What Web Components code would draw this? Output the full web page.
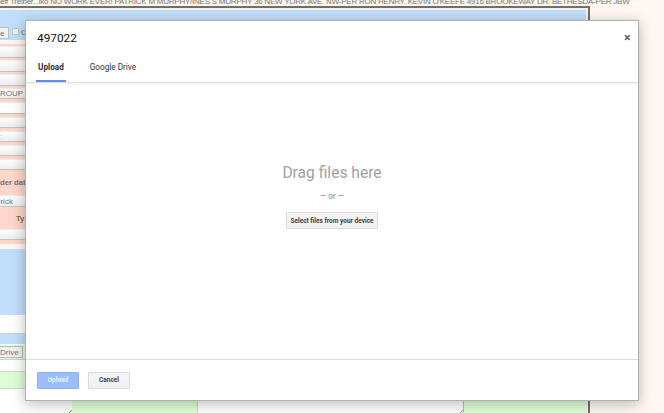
<!DOCTYPE html>
<html lang="en"><head><meta charset="utf-8"><title>497022</title>
<style>html,body{margin:0;height:100%;overflow:hidden;background:#fef8f1}body{font-family:"Liberation Sans",Arial,sans-serif}</style></head>
<body><upload-page></upload-page>
<script>
const define = (name, html) => {
  const t = document.createElement('template');
  t.innerHTML = html;
  customElements.define(name, class extends HTMLElement {
    constructor() { super(); this.attachShadow({mode:'open'}).append(t.content.cloneNode(true)); }
    connectedCallback() {
      const h = this.getAttribute('h');
      if (h) this.style.setProperty('--h', h + 'px');
    }
  });
};
define('form-band', `<style>:host{display:flex;flex:none;align-items:center;box-sizing:border-box;height:var(--h);background:var(--bg,#ffd6ca);white-space:nowrap;font-size:8px;color:#77716f}
:host([tone=blue]){--bg:#c1dffb}:host([tone=cream]){--bg:#fef8f0}:host([tone=white]){--bg:#fff}:host([tone=green]){--bg:#deffd5}:host([tone=line]){--bg:#d0d0d0}</style><slot></slot>`);
define('form-field', `<style>:host{display:flex;flex:none;align-items:center;box-sizing:border-box;height:var(--h);background:linear-gradient(#fdfdfd,#eee);border-top:1px solid #ececec;border-bottom:1px solid #c6c0be;font-size:8px;line-height:9px;color:#687684;white-space:nowrap}
:host([plain]){background:#fff}</style><slot></slot>`);
define('order-form', `<style>:host{display:flex;flex-direction:column;flex:none;box-sizing:border-box;width:590px;height:407px;border-top:2px solid #716f68;border-right:2px solid #716f68;overflow:hidden}
.inner{flex:1;border-top:2px solid #f4f3ec;border-right:2px solid #f4f3ec;display:flex;flex-direction:column;overflow:hidden}
.top{display:flex;align-items:center;padding-top:15px}
.btn{box-sizing:border-box;width:9px;height:12px;line-height:11px;background:#f2f2f2;border:1px solid #b8bec5;border-left:0;font-size:8px;color:#777}
.box{box-sizing:border-box;width:7px;height:7px;border:1px solid #bdc4ca;background:#f0f2f3;border-radius:1px;margin:-3px 2px 0 3px}
.drive{box-sizing:border-box;width:23px;height:12px;line-height:11px;border:1px solid #bbb;border-left:0;background:#f2f2f2;color:#777}
.ty{padding-left:16px}b{font-size:7.7px}
form-band[h="12"]{align-items:stretch}
.note{width:72px;box-sizing:border-box;background:#fff;display:flex;align-items:flex-end;justify-content:flex-end}
.mid{width:267px;background:#fff;box-sizing:border-box;border-left:1px solid #ccd8c8;border-right:1px solid #bbb;display:flex;align-items:flex-end;justify-content:flex-end}
.green{width:125px}.early{margin-left:-4px}svg{display:block}</style>
<div class="inner">
<form-band tone="blue" h="30"><span class="top"><span class="btn">e</span><span class="box"></span><span>C</span></span></form-band>
<form-band tone="cream" h="4"></form-band><form-band h="2"></form-band>
<form-field h="12"></form-field><form-band h="2"></form-band>
<form-field h="12"></form-field><form-band h="2"></form-band>
<form-field h="12"></form-field><form-band h="2"></form-band>
<form-field h="11">ROUP</form-field><form-band h="3"></form-band>
<form-field plain h="12"></form-field><form-band h="3"></form-band>
<form-field h="11"></form-field><form-band h="3"></form-band>
<form-field h="11"><span style="color:#7ab0ca">:</span></form-field><form-band h="3"></form-band>
<form-field h="11"></form-field><form-band h="3"></form-band>
<form-field h="11"></form-field>
<form-band h="25"><b>der date</b></form-band>
<form-field h="12"><span class="early">erick</span></form-field>
<form-band h="22"><b class="ty">Ty</b></form-band>
<form-field h="11"></form-field><form-band h="4"></form-band>
<form-band tone="cream" h="5"></form-band>
<form-band tone="blue" h="66"></form-band><form-band tone="white" h="18"></form-band>
<form-band tone="line" h="1"></form-band><form-band tone="blue" h="10"></form-band>
<form-band tone="white" h="1"></form-band>
<form-band tone="green" h="14"><span class="drive">Drive</span></form-band>
<form-band tone="line" h="1"></form-band><form-band tone="white" h="11"></form-band><form-band tone="line" h="1"></form-band>
<form-band tone="green" h="16"></form-band><form-band tone="line" h="1"></form-band><form-band tone="white" h="12"></form-band>
<form-band tone="green" h="12"><span class="note"><svg width="3" height="3"><path d="M0 3L3 0" stroke="#888"/></svg></span><span class="green"></span><span class="mid"><svg width="3" height="3"><path d="M0 3L3 0" stroke="#888"/></svg></span></form-band>
</div>`);
define('notice-line', `<style>:host{display:block;flex:none;height:6px;overflow:visible;white-space:pre;font-size:8px;line-height:9px;color:#77736f}
span{display:block;width:max-content;margin-top:-3px;letter-spacing:-.236px}</style><span><slot></slot></span>`);
define('action-button', `<style>:host{display:inline-flex;box-sizing:border-box;align-items:center;justify-content:center;height:17px;border:1px solid #d9d9d9;border-radius:1px;background:linear-gradient(#f5f5f5,#f0f0f0);color:#424242;font:bold 6.5px Roboto,sans-serif;white-space:nowrap}
:host([primary]){background:#9bbdfb;border-color:#91b0ee;color:#e9f1ff}</style><slot></slot>`);
define('nav-tab', `<style>:host{display:flex;box-sizing:border-box;padding:0 2px;height:27px;font:8.2px/24px Roboto,sans-serif;color:#303030;white-space:nowrap}
:host([active]){font-weight:bold;border-bottom:2px solid #5f8be8}</style><slot></slot>`);
define('picker-dialog', `<style>:host{display:flex;flex-direction:column;box-sizing:border-box;border:1px solid #afb0b0;background:#fff;box-shadow:0 3px 14px rgba(0,0,0,.27);font-family:Roboto,sans-serif;color:#111}
header{height:62px;box-sizing:border-box;border-bottom:1px solid #dedede;box-shadow:0 1px 2px #0001;padding:0 7px 0 11px;flex:none}
.title{display:flex;justify-content:space-between;align-items:center;height:34px}.title h1{font:400 11.8px/14px Roboto,sans-serif;margin:0}
.title svg{margin:-2px .5px 0 0}
nav{display:flex;gap:22px;margin-left:-1px}
main{flex:1;display:flex;flex-direction:column;align-items:center;padding-top:80.5px;color:#a0a0a0}
.drag{font-size:15.6px;line-height:19px}.or{font-size:8.2px;font-weight:500;line-height:10px;margin:8px 0 11.5px}
footer{height:41px;box-sizing:border-box;border-top:1px solid #dcdcdc;padding:0 11px;display:flex;gap:9px;align-items:center;flex:none}
footer action-button{width:42px}main action-button{width:92px}</style>
<header><div class="title"><h1>497022</h1><svg width="7" height="7" viewBox="0 0 7 7"><path d="M1 1.2l4.7 4.7M5.7 1.2L1 5.9" stroke="#5c5c5c" stroke-width="1.5"/></svg></div>
<nav><nav-tab active>Upload</nav-tab><nav-tab>Google Drive</nav-tab></nav></header>
<main><div class="drag">Drag files here</div><div class="or">— or —</div><action-button>Select files from your device</action-button></main>
<footer><action-button primary>Upload</action-button><action-button>Cancel</action-button></footer>`);
define('upload-page', `<style>:host{display:flex;flex-direction:column;position:relative;width:664px;height:413px;overflow:hidden;background:#fef8f1}
picker-dialog{position:absolute;left:25px;top:20px;width:614px;height:381px}</style>
<notice-line>eff Treiber...iko NO WORK EVER! PATRICK M MURPHY/INES S MURPHY 36 NEW YORK AVE. NW-PER RON HENRY. KEVIN O'KEEFE 4916 BROOKEWAY DR. BETHESDA-PER JBW</notice-line>
<order-form></order-form><picker-dialog></picker-dialog>`);
</script></body></html>
